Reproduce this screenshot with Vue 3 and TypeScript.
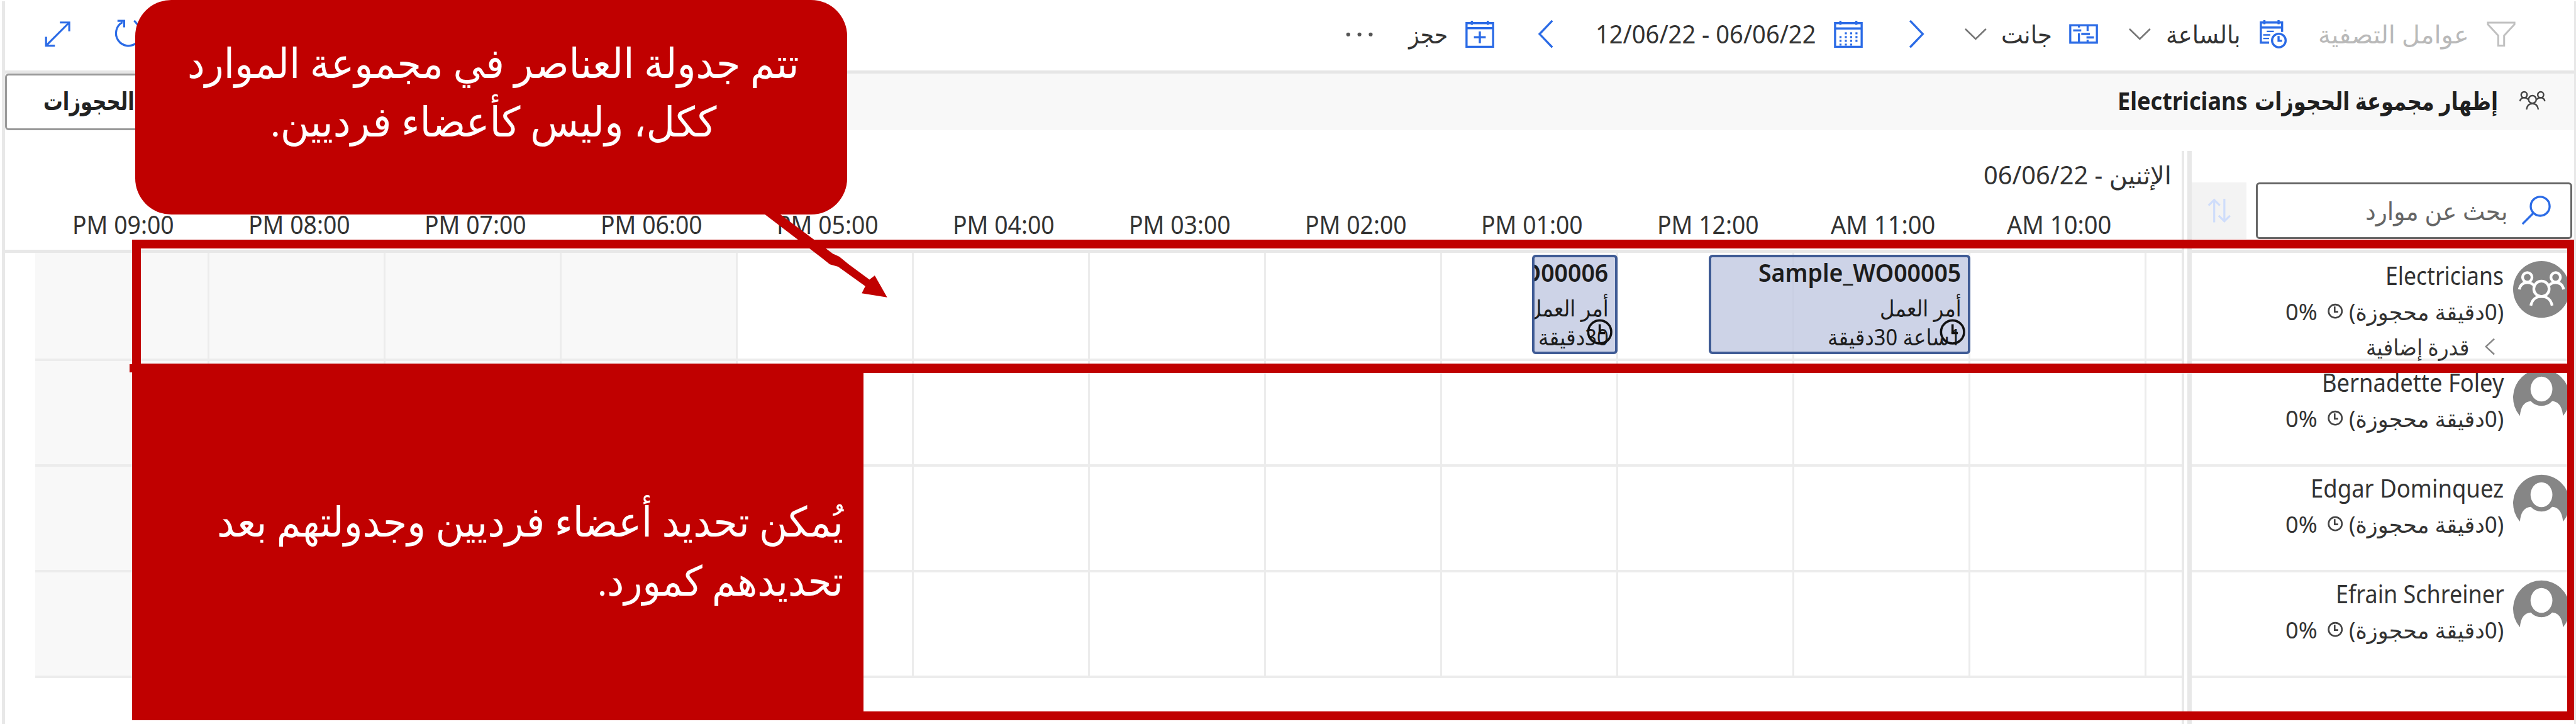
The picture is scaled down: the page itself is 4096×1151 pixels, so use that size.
<script setup lang="ts">
interface Member { name: string; width: number }

// Stretches a label horizontally so that it fills the width of its slot.
const vFit = {
  mounted(el: HTMLElement) {
    const slot = el.parentElement as HTMLElement
    const natural = el.getBoundingClientRect().width
    const wanted = slot.getBoundingClientRect().width
    if (natural > 0) el.style.transform = `scaleX(${wanted / natural})`
  },
}

const hours: string[] = [
  'PM 09:00', 'PM 08:00', 'PM 07:00', 'PM 06:00', 'PM 05:00', 'PM 04:00',
  'PM 03:00', 'PM 02:00', 'PM 01:00', 'PM 12:00', 'AM 11:00', 'AM 10:00',
]
const members: Member[] = [
  { name: 'Bernadette Foley', width: 308 },
  { name: 'Edgar Dominquez', width: 327 },
  { name: 'Efrain Schreiner', width: 285 },
]
const rows = [0, 1, 2, 3]
const offHours = (col: number): boolean => col < 4
const dots: number[][] = [
  [20, 25], [29, 25], [38, 25],
  [11, 33], [20, 33], [29, 33], [38, 33],
  [11, 41], [20, 41], [29, 41], [38, 41],
  [11, 49], [20, 49], [29, 49],
].map(([x, y]) => [x, y * 0.8 + 4.5])
</script>

<template>
  <div class="board">
    <header class="toolbar">
      <svg class="ic expand" viewBox="0 0 46 46"><path d="M2 44 44 2M27 2H44V18M2 28V44H18" /></svg>
      <svg class="ic refresh" viewBox="0 0 52 52"><path d="M15 5A22.500 22.500 0 1 0 42 9M36 2 42 9M6 2.500H18V14" /></svg>
      <svg class="more" viewBox="0 0 46 8"><circle cx="4" cy="4" r="3.300" /><circle cx="23" cy="4" r="3.300" /><circle cx="42" cy="4" r="3.300" /></svg>
      <span class="t book"><span v-fit dir="rtl">حجز</span></span>
      <svg class="ic calplus" viewBox="0 0 49 46"><path d="M2 4H47V44H2ZM2 12.500H47M11 0V7M38 0V7M24.500 18V38M14.500 28H34.500" /></svg>
      <svg class="ic prev" viewBox="0 0 27 48"><path d="M25 1 3 24 25 47" /></svg>
      <span class="t range"><span v-fit>12/06/22 - 06/06/22</span></span>
      <svg class="ic cal" viewBox="0 0 49 46">
        <path d="M2 4H47V44H2ZM2 13H47M11 0V7M38 0V7" />
        <rect v-for="(d, i) in dots" :key="i" class="dot" :x="d[0] - 1.500" :y="d[1] - 5" width="3.400" height="3.400" />
      </svg>
      <svg class="ic next" viewBox="0 0 27 48"><path d="M2 1 24 24 2 47" /></svg>
      <svg class="down d1" viewBox="0 0 37 20"><path d="M1 1 18.500 18 36 1" /></svg>
      <span class="t gantt"><span v-fit dir="rtl">جانت</span></span>
      <svg class="ic ganticon" viewBox="0 0 50 34"><path d="M2 2H48V32H2ZM17 2V6M17 16V32M32 2V12M32 27V32M7 11H21M21 17H36M30 23H43" /></svg>
      <svg class="down d2" viewBox="0 0 37 20"><path d="M1 1 18.500 18 36 1" /></svg>
      <span class="t hourly"><span v-fit dir="rtl">بالساعة</span></span>
      <svg class="ic calclock" viewBox="0 0 46 48">
        <path d="M16 38H2V4H38V20M2 12.500H38M8 0V7M32 0V7" />
        <path class="thin" d="M12 19H24M6 25H18M6 31H16" />
        <circle cx="32.500" cy="34.500" r="11.500" /><path d="M32 27V35H38" />
      </svg>
      <span class="t filters"><span v-fit dir="rtl">عوامل التصفية</span></span>
      <svg class="funnel" viewBox="0 0 49 43"><path d="M2 2H47V5L29.500 24V41H19.500V24L2 5Z" /></svg>
    </header>

    <section class="groupbar">
      <button class="bookings"><span class="t"><span v-fit dir="rtl">الحجوزات</span></span></button>
      <span class="t b gname"><span v-fit>Electricians</span></span>
      <span class="t b gtitle"><span v-fit dir="rtl">إظهار مجموعة الحجوزات</span></span>
      <svg class="gicon" viewBox="0 0 44 32">
        <circle cx="8" cy="6" r="5" /><circle cx="36" cy="6" r="5" /><circle cx="22" cy="14" r="6.500" />
        <path d="M1 17C2 12 5 11 8 11 11 11 13 12 15 14M43 17C42 12 39 11 36 11 33 11 31 12 29 14M12 31C13 24 17 21 22 21 27 21 31 24 32 31" />
      </svg>
    </section>

    <main class="schedule">
      <section class="timeline">
        <div class="dayhead">
          <div class="dayline"><span class="t"><span v-fit dir="rtl">الإثنين - 06/06/22</span></span></div>
          <div class="hours">
            <div v-for="h in hours" :key="h" class="hour"><span class="t" :class="{ am: h[0] === 'A' }"><span v-fit>{{ h }}</span></span></div>
          </div>
        </div>
        <div class="grid">
          <div v-for="r in rows" :key="r" class="grow">
            <div v-for="(h, c) in hours" :key="h" class="cell" :class="{ off: offHours(c), first: c === 0 }"></div>
          </div>
          <article class="booking short">
            <div class="clip"><span class="t title"><span v-fit>Sample_WO00006</span></span></div>
            <div class="clip"><span class="t kind"><span v-fit dir="rtl">أمر العمل</span></span></div>
            <div class="clip"><span class="t dur"><span v-fit dir="rtl">30دقيقة</span></span></div>
            <svg class="bclock" viewBox="0 0 44 44"><circle cx="22" cy="22" r="19.500" /><path d="M22 9V24H31" /></svg>
          </article>
          <article class="booking long">
            <div class="clip"><span class="t title"><span v-fit>Sample_WO00005</span></span></div>
            <div class="clip"><span class="t kind"><span v-fit dir="rtl">أمر العمل</span></span></div>
            <div class="clip"><span class="t dur"><span v-fit dir="rtl">1ساعة 30دقيقة</span></span></div>
            <svg class="bclock" viewBox="0 0 44 44"><circle cx="22" cy="22" r="19.500" /><path d="M22 9V24H31" /></svg>
          </article>
        </div>
      </section>

      <div class="splitter"></div>

      <aside class="resources">
        <div class="searchrow">
          <div class="sort"><svg viewBox="0 0 40 44"><path d="M11 43V3M1 13 11 3 21 13M29 1V41M19 31 29 41 39 31" /></svg></div>
          <div class="search">
            <span class="t"><span v-fit dir="rtl">بحث عن موارد</span></span>
            <svg class="ic" viewBox="0 0 50 50"><circle cx="32" cy="18" r="16" /><path d="M21 29 2 48" /></svg>
          </div>
        </div>
        <div class="res lead">
          <div class="info">
            <div class="line"><span class="t" style="width: 200px"><span v-fit>Electricians</span></span></div>
            <div class="line small">
              <span class="t pct"><span v-fit>0%</span></span>
              <svg class="rclock" viewBox="0 0 26 26"><circle cx="13" cy="13" r="11.300" /><path d="M12 5V14H18" /></svg>
              <span class="t booked"><span v-fit dir="rtl">(0دقيقة محجوزة)</span></span>
            </div>
            <div class="line small extra">
              <span class="t"><span v-fit dir="rtl">قدرة إضافية</span></span>
              <svg viewBox="0 0 18 30"><path d="M17 1 2 15 17 29" /></svg>
            </div>
          </div>
          <svg class="avatar" viewBox="0 0 96 96">
            <circle cx="48" cy="48" r="48" fill="#868686" />
            <g fill="none" stroke="#fff" stroke-width="4.600">
              <circle cx="24" cy="27.500" r="8" /><circle cx="72" cy="27.500" r="8" /><circle cx="48" cy="47" r="13" />
              <path d="M10.500 48C12 40 17 36.500 24 36.500 29 36.500 33 38 36 42M85.500 48C84 40 79 36.500 72 36.500 67 36.500 63 38 60 42M30 75.500C32 65 39 60 48 60 57 60 64 65 66 75.500" />
            </g>
          </svg>
        </div>
        <div v-for="m in members" :key="m.name" class="res">
          <div class="info">
            <div class="line"><span class="t" :style="{ width: m.width + 'px' }"><span v-fit>{{ m.name }}</span></span></div>
            <div class="line small">
              <span class="t pct"><span v-fit>0%</span></span>
              <svg class="rclock" viewBox="0 0 26 26"><circle cx="13" cy="13" r="11.300" /><path d="M12 5V14H18" /></svg>
              <span class="t booked"><span v-fit dir="rtl">(0دقيقة محجوزة)</span></span>
            </div>
          </div>
          <svg class="avatar" viewBox="0 0 96 96">
            <path fill="#868686" d="M11.500 79A48 48 0 1 1 84.500 79C83 64 78 55 66 54Q59 62 48 62 37 62 30 54C18 55 13 64 11.500 79Z" />
            <ellipse cx="48" cy="33.500" rx="18.500" ry="21" fill="#fff" />
          </svg>
        </div>
      </aside>
    </main>

    <div class="frame group"></div>
    <div class="frame people"></div>
    <div class="tab"></div>
    <div class="note people-note">
      <p style="width: 1060px"><span v-fit dir="rtl">يُمكن تحديد أعضاء فرديين وجدولتهم بعد</span></p>
      <p style="width: 416px"><span v-fit dir="rtl">تحديدهم كمورد.</span></p>
    </div>
    <svg class="arrow" viewBox="0 0 220 160">
      <path d="M5 5 34 8 129 79 140 84 156 97 191 123 200 116 221 153 178 146 184 134 138 101 124 97 110 86 8 8Z" />
    </svg>
    <div class="note group-note">
      <p style="width: 1035px"><span v-fit dir="rtl">تتم جدولة العناصر في مجموعة الموارد</span></p>
      <p style="width: 755px"><span v-fit dir="rtl">ككل، وليس كأعضاء فرديين.</span></p>
    </div>
  </div>
</template>

<style>
html, body { margin: 0; background: #fff; overflow: hidden; }
</style>

<style scoped>
.board {
  zoom: 0.93966;
  position: relative;
  width: 4359px;
  height: 1225px;
  overflow: hidden;
  background: #fff;
  color: #333;
  font-family: "Noto Sans", "DejaVu Sans", sans-serif;
  font-size: 42px;
  box-sizing: border-box;
  padding: 2px 3px 0 9px;
}
.board::before, .board::after {
  content: "";
  position: absolute;
  top: 2px;
  bottom: 0;
  background: #e8e8e8;
}
.board::before { left: 3px; width: 6px; }
.board::after { right: 0; width: 3px; }
.board * { box-sizing: border-box; }
.t { display: block; flex: none; height: 60px; line-height: 60px; white-space: nowrap; text-align: left; direction: ltr; }
.t > span, .note p > span { display: inline-block; transform-origin: 0 50%; white-space: nowrap; }
.b { font-weight: 700; color: #1f1f1f; }
svg { display: block; flex: none; overflow: visible; fill: none; }
.ic { stroke: #2b6be6; stroke-width: 3.6; }

.toolbar { display: flex; align-items: center; height: 122px; padding-bottom: 5px; border-bottom: 5.400px solid #e6e6e6; }
.expand { width: 44px; height: 43px; margin-left: 67px; }
.refresh { width: 50px; height: 49px; margin-left: 73px; }
.more { width: 46px; height: 8px; margin-left: 2034px; fill: #555; }
.book { width: 66px; margin-left: 61px; }
.calplus { width: 49px; height: 46px; margin-left: 30px; }
.prev { width: 27px; height: 47px; margin-left: 73px; }
.range { width: 373px; margin-left: 71px; }
.cal { width: 49px; height: 46px; margin-left: 30px; }
.dot { fill: #2b6be6; stroke: none; }
.next { width: 27px; height: 47px; margin-left: 78px; }
.down { width: 37px; height: 20px; stroke: #777; stroke-width: 2.800; }
.d1 { margin-left: 68px; }
.gantt { width: 86px; margin-left: 25px; }
.ganticon { width: 49px; height: 34px; margin-left: 28px; }
.d2 { margin-left: 53px; }
.hourly { width: 126px; margin-left: 25px; }
.calclock { width: 46px; height: 48px; margin-left: 33px; }
.thin { stroke-width: 2.600; }
.filters { width: 255px; margin-left: 53px; color: #b9b9b9; }
.funnel { width: 49px; height: 43px; margin-left: 30px; stroke: #c0c0c0; stroke-width: 3.200; }

.groupbar { display: flex; align-items: center; height: 96px; background: #f8f8f8; }
.bookings { width: 600px; height: 96px; padding: 0 0 2px 61px; background: #fff; border: 3.200px solid #999; border-radius: 6px; font: inherit; font-weight: 600; color: #222; }
.bookings .t { width: 154px; }
.gname { width: 220px; margin-left: 2974px; margin-bottom: 2px; }
.gtitle { width: 412px; margin-left: 12px; margin-bottom: 2px; }
.gicon { width: 44px; height: 32px; margin: 0 0 3px 36px; stroke: #444; stroke-width: 2.600; }

.schedule { display: flex; height: 1005px; }
.timeline { width: 3683px; }
.dayhead { height: 203px; display: flex; flex-direction: column; }
.dayline { display: flex; justify-content: flex-end; padding: 46px 18px 0 0; }
.dayline .t { width: 318px; }
.hours { display: flex; margin-top: 24px; padding-left: 51px; }
.hour { display: flex; justify-content: flex-end; width: 298px; padding-right: 59.500px; }
.hour:first-child { width: 294px; }
.hour .t { width: 172px; }
.hour .t.am { width: 177px; }
.grid { position: relative; border-top: 5.400px solid #e8e8e8; padding-left: 51px; }
.grow { display: flex; height: 178.800px; border-bottom: 4.300px solid #ececec; }
.grow:first-of-type { height: 182.600px; }
.cell { width: 298px; border-right: 3.200px solid #ececec; }
.cell.first { width: 294px; }
.cell.off { background: #f8f8f8; }

.booking { position: absolute; top: 2.500px; height: 168px; padding: 0 11px 0 0; overflow: hidden; background: rgba(192, 200, 225, 0.8); border: 4.300px solid #3f5b95; border-radius: 6px; color: #1c1c1c; }
.short { left: 2583px; width: 145px; }
.long { left: 2882px; width: 443px; }
.clip { display: flex; justify-content: flex-end; height: 60px; }
.clip .t { margin-top: -4px; }
.title { width: 343px; font-weight: 600; }
.kind { width: 138px; font-size: 38px; }
.dur { font-size: 38px; }
.clip:nth-child(3) { margin-top: -12px; }
.short .dur { width: 119px; }
.long .dur { width: 226px; }
.bclock { position: absolute; right: 4px; top: 105px; width: 44px; height: 44px; stroke: #111; stroke-width: 3.800; }

.splitter { width: 17px; margin-top: 35px; border-left: 5px solid #e8e8e8; border-right: 8px solid #e8e8e8; }

.resources { width: 647px; }
.searchrow { display: flex; height: 203px; padding-top: 89px; }
.sort { display: flex; align-items: center; justify-content: center; width: 92px; height: 95px; background: #f3f3f3; }
.sort svg { width: 40px; height: 42px; stroke: #cfddfb; stroke-width: 3.600; }
.search { display: flex; align-items: center; width: 536px; height: 95px; margin-left: 16px; padding-left: 182px; border: 3.200px solid #666; border-radius: 6px; color: #666; }
.search .t { width: 241px; }
.search svg { width: 50px; height: 50px; margin: 0 0 0 23px; }
.res { display: flex; justify-content: flex-end; height: 178.800px; padding: 5.500px 7px 0 0; border-bottom: 4.300px solid #ececec; }
.res.lead { height: 188px; border-top: 5.400px solid #e8e8e8; padding-top: 7.500px; }
.lead .avatar { margin-top: 6px; }
.info { margin-right: 16px; }
.line { display: flex; justify-content: flex-end; align-items: center; height: 61px; }
.small { font-size: 38px; height: 60px; }
.pct { width: 54px; margin-right: 18px; }
.rclock { width: 26px; height: 27px; margin-right: 10px; stroke: #444; stroke-width: 2.800; }
.booked { width: 262px; }
.extra .t { width: 175px; margin-right: 26px; }
.extra { padding-right: 15px; }
.extra svg { width: 17px; height: 30px; stroke: #888; stroke-width: 2.800; }
.avatar { width: 96px; height: 96px; margin-top: 8px; }

.frame { position: absolute; border: 15px solid #c00000; }
.frame.group { left: 224px; top: 405px; right: 0; height: 225px; }
.frame.people { left: 224px; top: 616px; right: 0; height: 603px; }
.tab { position: absolute; left: 219px; top: 616px; width: 5px; height: 14px; background: #c00000; }
.note { position: absolute; background: #c00000; color: #fff; font-family: "Liberation Serif", "DejaVu Sans", serif; font-size: 70px; }
.note p { margin: 0; height: 100px; line-height: 100px; direction: ltr; text-align: left; white-space: nowrap; }
.people-note { left: 224px; top: 616px; width: 1237px; height: 603px; padding: 218px 34px 0 0; display: flex; flex-direction: column; align-items: flex-end; }
.group-note { left: 229px; top: 0; width: 1204px; height: 363px; padding: 58px 0 0 8px; border-radius: 61px; display: flex; flex-direction: column; align-items: center; }
.arrow { position: absolute; left: 1280px; top: 350px; width: 220px; height: 160px; fill: #c00000; }
</style>
